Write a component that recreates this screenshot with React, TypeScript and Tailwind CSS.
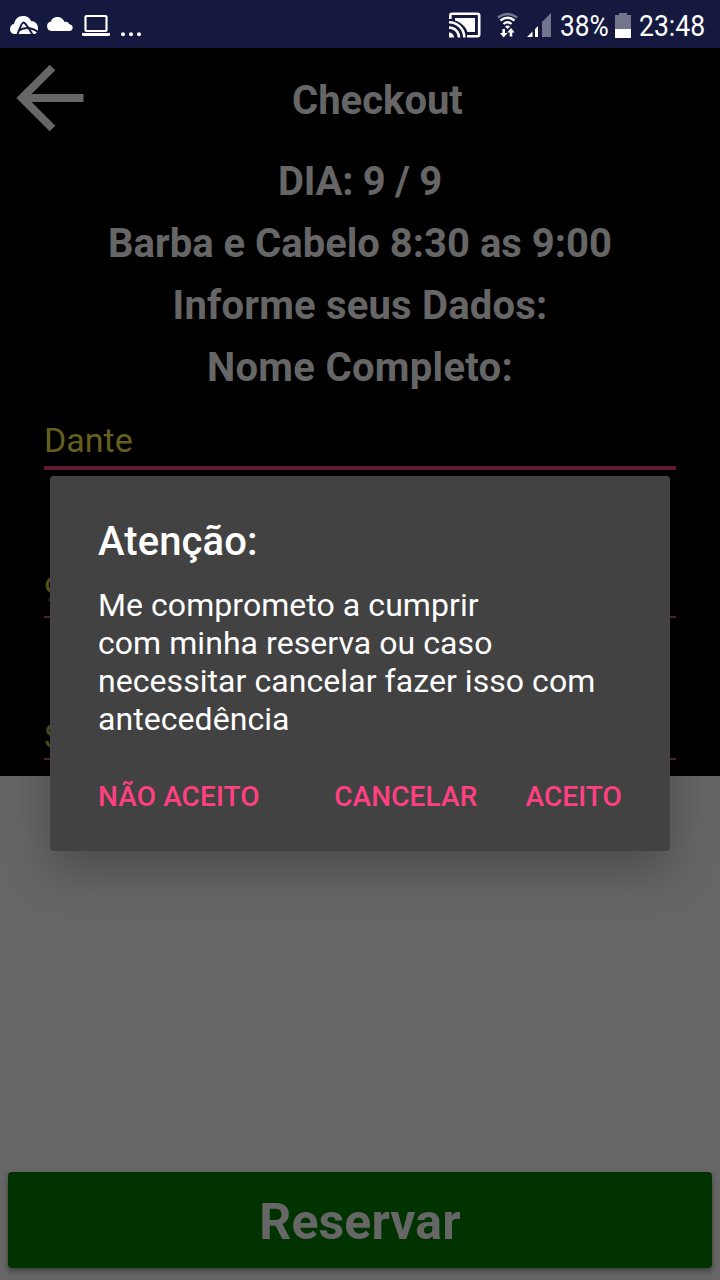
import type { ReactNode } from "react";

const infoLines = [
  { text: "DIA: 9 / 9", spacing: "tracking-[-0.3px]" },
  { text: "Barba e Cabelo 8:30 as 9:00", spacing: "tracking-normal" },
  { text: "Informe seus Dados:", spacing: "tracking-[0.2px]" },
  { text: "Nome Completo:", spacing: "tracking-[0.3px]" },
];

function NotificationIcons() {
  return (
    <svg width="150" height="48" viewBox="0 0 150 48" fill="#fff">
      <path d="M14 34a4.500 4.500 0 0 1-4-5c0-3 2-5 4-5 1-5 4-8 9-8 4 0 7 2 8 5 4 0 7 3 7 7 0 3-1 5-3 6z" />
      <path
        d="M17.500 34.500C19.500 29 21.500 22.500 23.500 22.500s4 4 9 12M18 31c6-4 13-4 20 1"
        fill="none"
        stroke="#151940"
        strokeWidth="2"
      />
      <path d="M51.500 31a4.800 4.800 0 0 1-.500-9.500C52 18 55 17 57.500 17c3.500 0 6 2 7 5 2-.500 4 0 4.500 2 2 .300 3.700 1.500 3.700 3.700 0 2-1.500 3.300-3.700 3.300z" />
      <rect x="85.500" y="16" width="21" height="15" rx="1" fill="none" stroke="#fff" strokeWidth="2.200" />
      <path d="M82 33h28v1.500q0 1.500-1.500 1.500h-25q-1.500 0-1.500-1.500z" />
      <circle cx="123" cy="34.200" r="2" />
      <circle cx="131" cy="34.200" r="2" />
      <circle cx="139" cy="34.200" r="2" />
    </svg>
  );
}

function SignalIcons() {
  return (
    <svg width="112" height="48" viewBox="440 0 112 48" fill="none">
      <g stroke="#fff" strokeWidth="2.600">
        <path d="M450.300 19v-3.500q0-1.700 1.700-1.700h25.500q1.700 0 1.700 1.700v19q0 1.700-1.700 1.700H467" />
        <path d="M449 27.500a10 10 0 0 1 10 10M449 22.200a15.300 15.300 0 0 1 15.300 15.300" />
      </g>
      <path d="M449 32.500a5 5 0 0 1 5 5h-5z" fill="#fff" />
      <path d="M455 18h20v14h-7.500c-1.500-5-6-9.500-12.500-11.500z" fill="#fff" />
      <path d="M498 17.500q9.500-7 19 0" stroke="#73758c" strokeWidth="2.600" />
      <g stroke="#fff" strokeWidth="2.300">
        <path d="M500.500 20.500q7-5.500 14 0" />
        <path d="M503.500 24q4-3.500 8 0" />
      </g>
      <path d="M505 26.500q2.500-2 5 0l-2.500 2.500z" fill="#fff" />
      <path d="M502.400 29h2.600v4h2.500l-3.800 4.500-3.700-4.500h2.400zM509.700 36.500h2.600v-4h2.400l-3.700-4.500-3.800 4.500h2.500z" fill="#fff" />
      <path d="M527 37l5.500-5.500V37zM535 37v-8l3-3V37z" fill="#fff" />
      <path d="M542 37V22l9-9v24z" fill="#73758c" />
    </svg>
  );
}

function StatusBar() {
  return (
    <header className="relative flex h-12 justify-between bg-[#151940] text-white">
      <NotificationIcons />
      <div className="flex">
        <SignalIcons />
        <div className="flex w-[63px] items-center pt-1 pl-2">
          <span className="origin-left scale-x-[0.875] text-[30px] leading-none">38%</span>
        </div>
        <svg width="16" height="48" viewBox="615 0 16 48">
          <path d="M615 15h4v-2h8v2h4v14h-16z" fill="#73758c" />
          <path d="M615 29h16v9h-16z" fill="#fff" />
        </svg>
        <div className="flex w-[89px] items-center pt-1 pl-2">
          <span className="origin-left scale-x-[0.885] text-[30px] leading-none">23:48</span>
        </div>
      </div>
    </header>
  );
}

function Field({ value, className }: { value: string; className: string }) {
  return (
    <div className={`mx-11 flex items-end text-[34px] leading-10 ${className}`}>
      {value}
    </div>
  );
}

function DialogButton({ children }: { children: ReactNode }) {
  return (
    <button className="text-[28px] leading-8 font-medium tracking-[0.1px] whitespace-nowrap">
      {children}
    </button>
  );
}

function Dialog() {
  return (
    <div
      role="dialog"
      className="absolute top-[476px] left-[50px] flex h-[375px] w-[620px] flex-col rounded-[4px] bg-[#424242] px-12 text-white shadow-[0_18px_48px_rgba(0,0,0,0.28)]"
    >
      <h2 className="mt-[42px] text-[40px] leading-[47px] font-medium tracking-[0.1px]">Atenção:</h2>
      <p className="mt-[21px] text-[32px] leading-[38px] tracking-[0.06px] whitespace-nowrap">
        Me comprometo a cumprir
        <br />
        com minha reserva ou caso
        <br />
        necessitar cancelar fazer isso com
        <br />
        antecedência
      </p>
      <div className="mt-[43px] flex justify-between text-[#ff4081]">
        <DialogButton>NÃO ACEITO</DialogButton>
        <div className="flex gap-12">
          <DialogButton>CANCELAR</DialogButton>
          <DialogButton>ACEITO</DialogButton>
        </div>
      </div>
    </div>
  );
}

export default function App() {
  return (
    <div className="relative flex h-[1280px] w-[720px] flex-col overflow-hidden bg-[#666] font-['Roboto',sans-serif]">
      <StatusBar />
      <main className="h-[728px] bg-black text-[#666]">
        <div className="flex h-[103px] items-center pl-4">
          <svg className="mb-[3px]" width="68" height="68" viewBox="0 0 68 68" fill="none" stroke="#666" strokeWidth="8">
            <path d="M36.500 3.500L6 34l30.500 30.500M6 34h61.500" />
          </svg>
          <h1 className="ml-[208px] pt-[3px] text-[40px] font-bold">Checkout</h1>
        </div>
        <div className="text-center text-[40px] leading-[62px] font-bold">
          {infoLines.map(({ text, spacing }) => (
            <p key={text} className={spacing}>{text}</p>
          ))}
        </div>
        <Field value="Dante" className="h-[71px] border-b-4 border-[#661a33] pb-1.5 text-[#665f1d]" />
        <Field value="9" className="h-[148px] border-b-2 border-[#5c2433] pb-[7px] text-[#665f1d]" />
        <Field value="S" className="h-[142px] border-b-2 border-[#5c2433] pb-0.5 text-[#4d5a1a]" />
      </main>
      <button className="mx-2 mt-auto mb-3 h-24 rounded-[4px] bg-[#030] pt-1 text-[50px] font-bold tracking-[0.1px] text-[#666] shadow-[0_3px_5px_rgba(0,0,0,0.4)]">
        Reservar
      </button>
      <Dialog />
    </div>
  );
}
